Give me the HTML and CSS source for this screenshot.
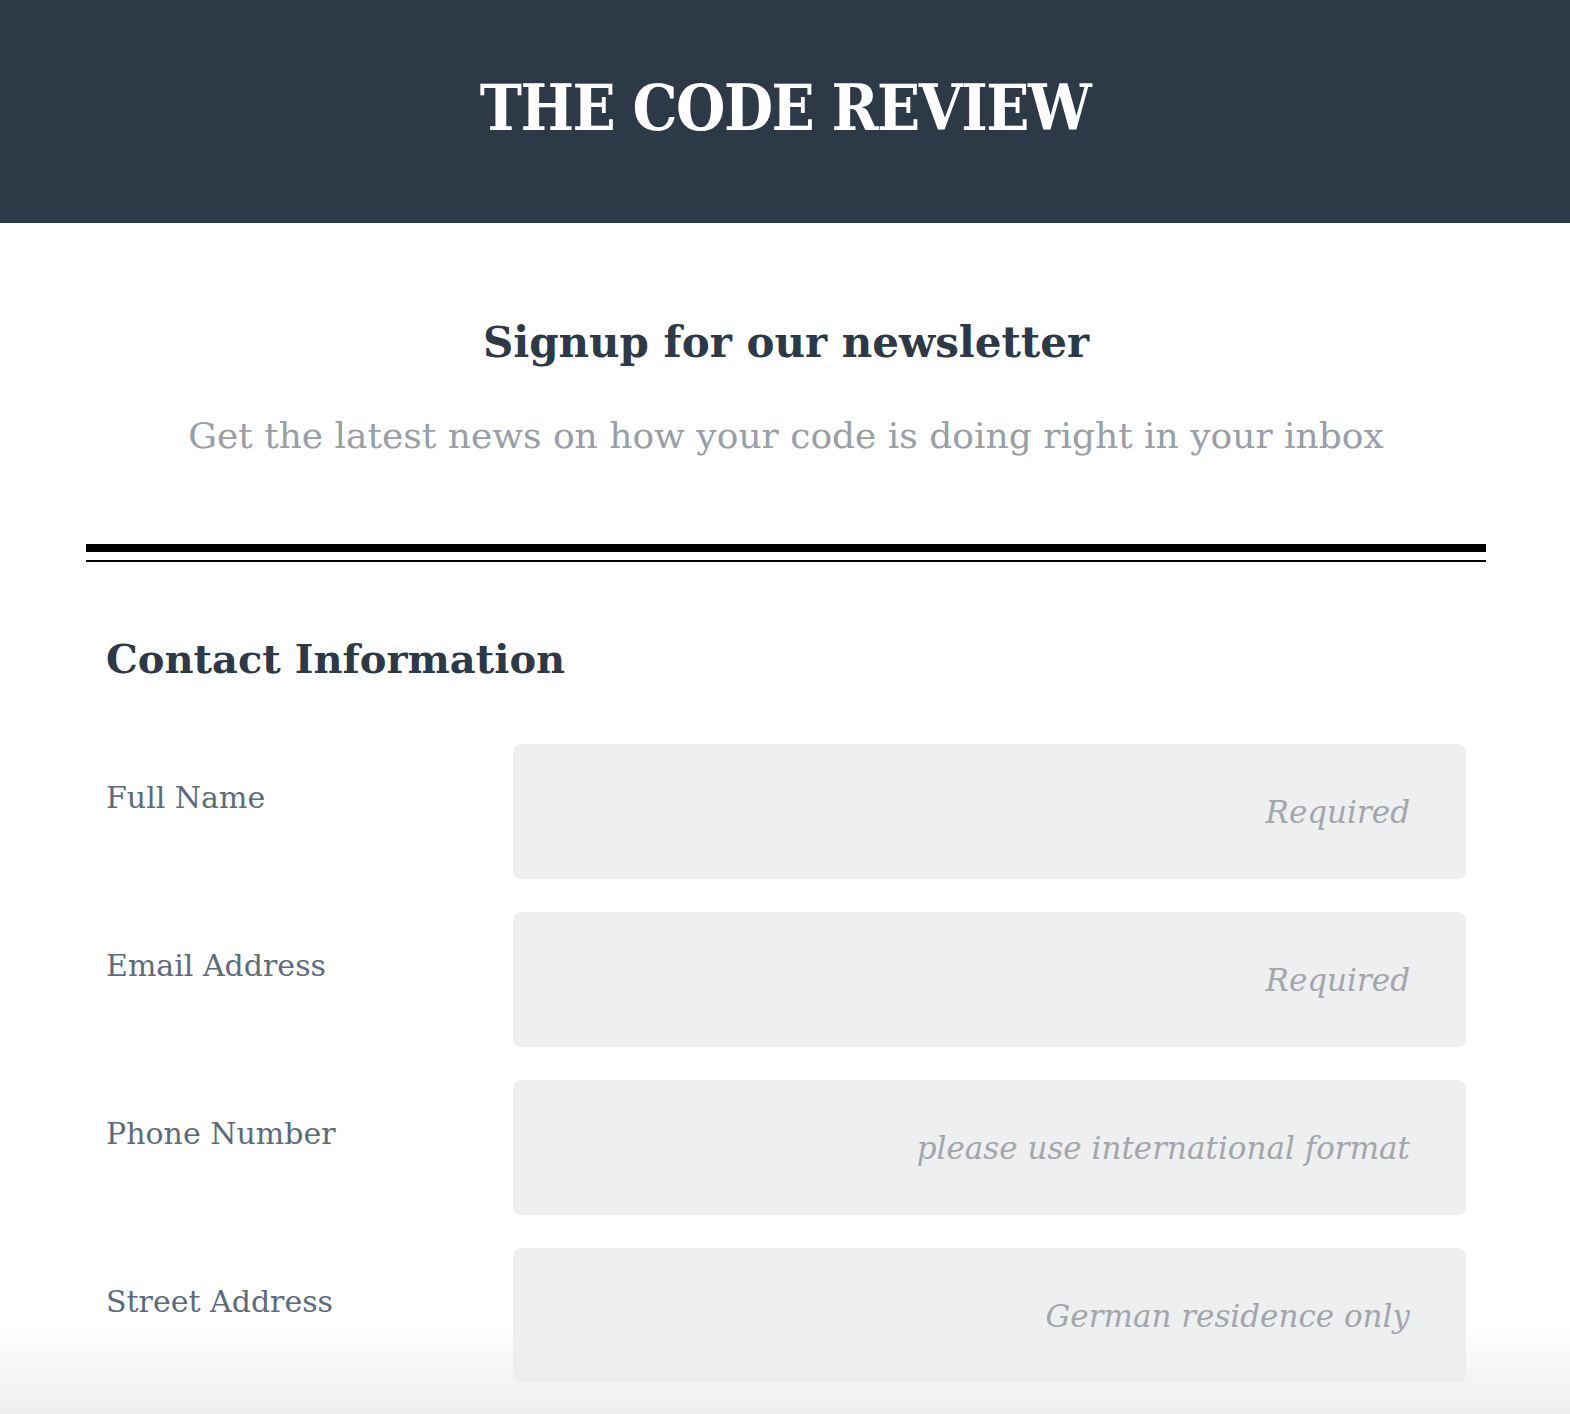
FILE: index.html
```html
<!DOCTYPE html>
<html>
<head>
<meta charset="utf-8">
<link rel="stylesheet" href="styles.css">
</head>
<body>
<header class="masthead">
  <h1 class="brand">THE CODE REVIEW</h1>
</header>
<main class="page">
  <section class="intro">
    <h2 class="intro-title">Signup for our newsletter</h2>
    <p class="intro-sub">Get the latest news on how your code is doing right in your inbox</p>
  </section>
  <div class="rule"></div>
  <form class="form">
    <h3 class="section-title">Contact Information</h3>
    <div class="row">
      <label class="label">Full Name</label>
      <input class="field" type="text" placeholder="Required">
    </div>
    <div class="row">
      <label class="label">Email Address</label>
      <input class="field" type="text" placeholder="Required">
    </div>
    <div class="row">
      <label class="label">Phone Number</label>
      <input class="field" type="text" placeholder="please use international format">
    </div>
    <div class="row">
      <label class="label">Street Address</label>
      <input class="field" type="text" placeholder="German residence only">
    </div>
  </form>
</main>
<div class="shade"></div>
</body>
</html>
```
FILE: styles.css
```css
html, body {
  margin: 0;
  padding: 0;
  background: #ffffff;
  font-family: "DejaVu Serif", "Liberation Serif", serif;
  height: 1414px;
  overflow: hidden;
}
.masthead {
  background: #2e3947;
  height: 223px;
  display: flex;
  align-items: center;
  justify-content: center;
}
.brand {
  margin: 0;
  color: #ffffff;
  font-family: "DejaVu Serif Condensed", "DejaVu Serif", serif;
  font-stretch: condensed;
  font-size: 63px;
  font-weight: bold;
  letter-spacing: -1.5px;
  padding-bottom: 8px;
}
.page {
  padding: 0 84px 0 86px;
}
.intro {
  text-align: center;
  padding-top: 90px;
}
.intro-title {
  margin: 0;
  color: #2e3947;
  font-size: 42px;
  font-weight: bold;
  line-height: 60px;
}
.intro-sub {
  margin: 38px 0 0;
  color: #9a9ea6;
  font-size: 36px;
  line-height: 50px;
}
.rule {
  margin-top: 83px;
  height: 8px;
  border-top: 8px solid #000;
  border-bottom: 2px solid #000;
}
.form {
  padding: 60px 20px 0;
}
.section-title {
  margin: 0 0 48px;
  color: #2e3947;
  font-size: 40px;
  font-weight: bold;
  line-height: 74px;
}
.row {
  display: flex;
  align-items: flex-start;
  margin-bottom: 33px;
}
.label {
  width: 407px;
  flex: none;
  color: #5d6b7a;
  font-size: 30px;
  padding-top: 36px;
}
.field {
  flex: 1;
  height: 135px;
  box-sizing: border-box;
  border: none;
  border-radius: 8px;
  background: #eeeff1;
  text-align: right;
  padding: 0 56px 0 20px;
  font-family: inherit;
  font-size: 31px;
  font-style: italic;
  color: #2e3947;
  outline: none;
  margin: 0;
}
.field::placeholder {
  color: #a3a6ac;
  font-style: italic;
}
.shade {
  position: absolute;
  left: 0;
  right: 0;
  top: 1324px;
  height: 90px;
  background: linear-gradient(to bottom, rgba(235,235,235,0), rgba(235,235,235,0.85));
  pointer-events: none;
}
```
